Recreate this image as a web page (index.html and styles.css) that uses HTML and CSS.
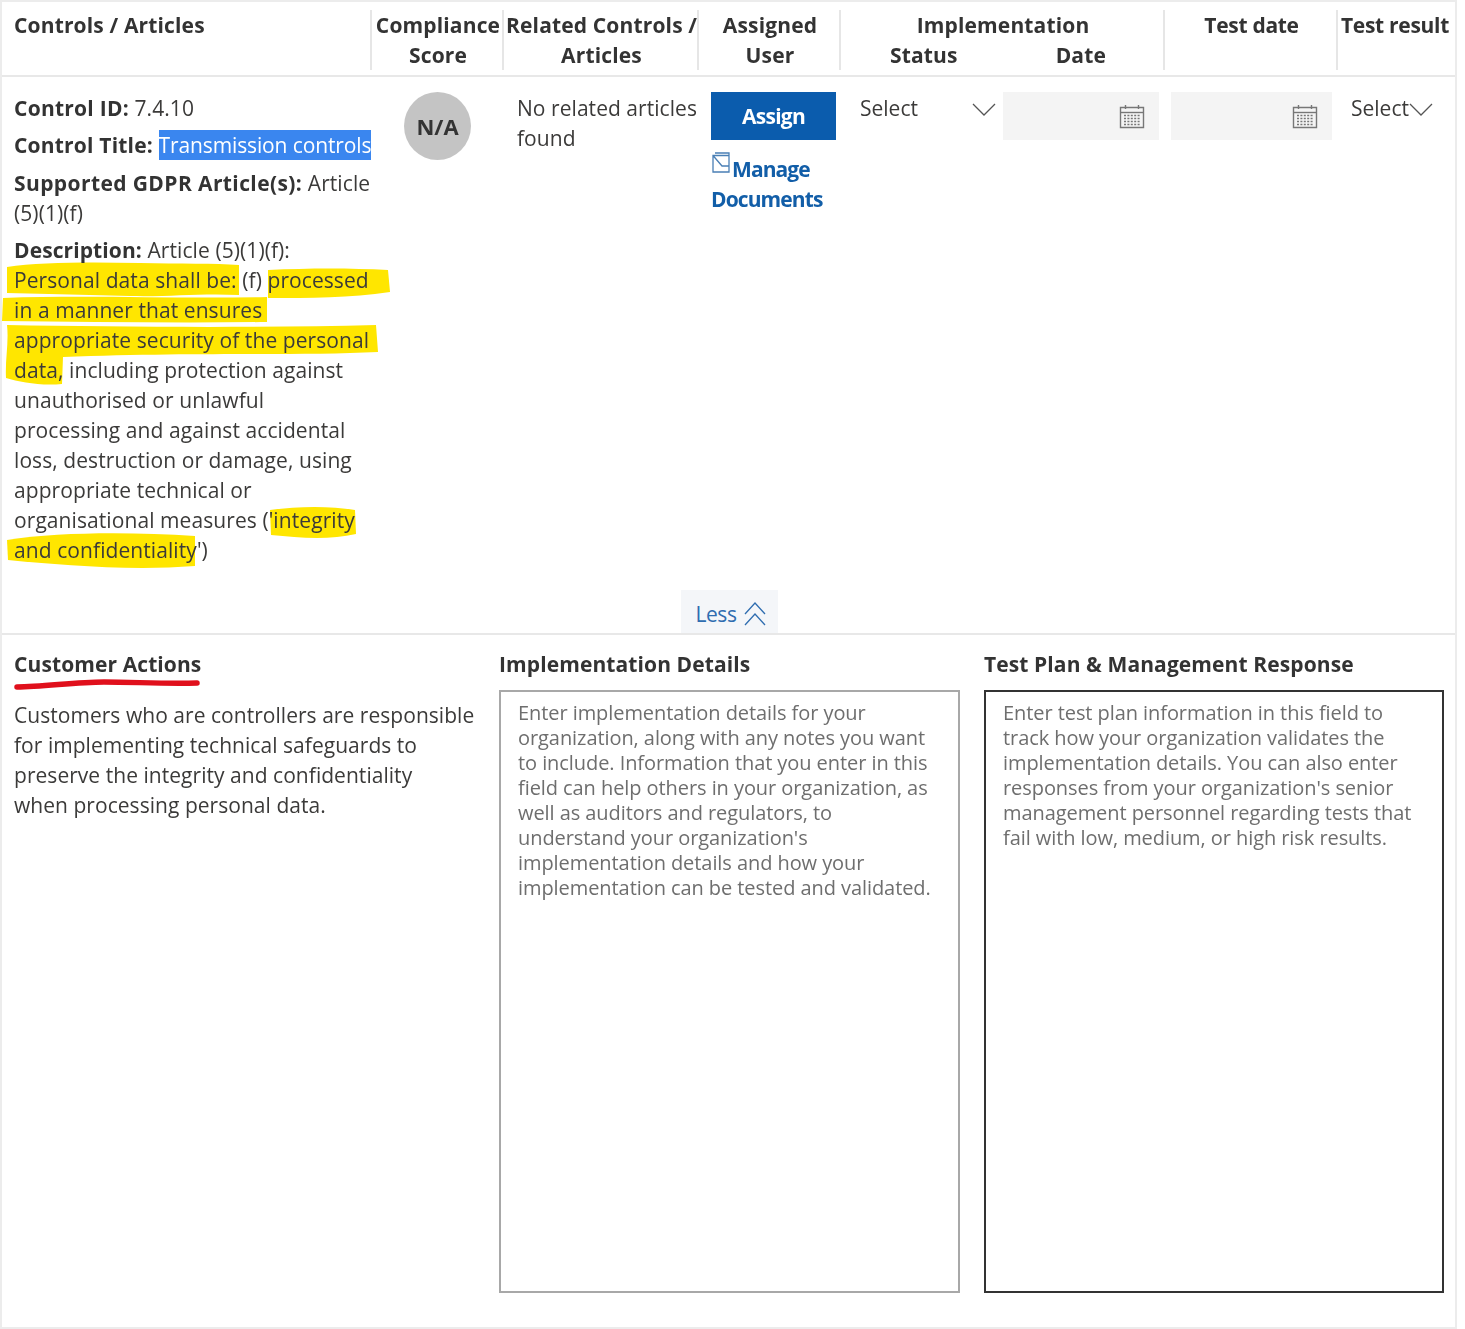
FILE: index.html
```html
<!DOCTYPE html>
<html lang="en">
<head>
<meta charset="utf-8">
<title>Controls</title>
<link rel="stylesheet" href="styles.css">
</head>
<body>
<div class="frame">
  <header class="head grid">
    <div class="hc hc-left">Controls / Articles</div>
    <div class="hc">Compliance<br>Score</div>
    <div class="hc">Related Controls /<br>Articles</div>
    <div class="hc">Assigned<br>User</div>
    <div class="hc">Implementation
      <div class="hsplit"><span>Status</span><span>Date</span></div>
    </div>
    <div class="hc hc-date">Test date</div>
    <div class="hc hc-last">Test result</div>
  </header>

  <section class="row grid">
    <div class="control">
      <svg class="marks" width="400" height="600" viewBox="0 0 400 600" aria-hidden="true">
        <g fill="#ffe600">
          <path d="M7 267 C40 262 90 262 140 263 C180 264 215 263 239 265 L239 295 C200 293 170 297 130 296 C90 295 50 294 7 293 Z"/>
          <path d="M268 270 C310 268 350 268 388 270 L390 292 C350 298 310 298 268 298 Z"/>
          <path d="M3 298 C90 295 180 299 267 297 L267 322 C180 323 90 322 2 321 Z"/>
          <path d="M7 325 C120 327 260 328 376 325 L378 352 C300 356 200 352 63 357 L62 384 C40 386 20 382 6 378 C5 360 9 342 7 325 Z"/>
          <path d="M270 510 C300 506 330 506 355 510 L356 534 C330 540 300 538 271 535 Z"/>
          <path d="M7 540 C60 532 130 532 195 536 L195 566 C130 571 60 565 8 560 Z"/>
        </g>
      </svg>
      <p class="line line-id"><b>Control ID:</b> 7.4.10</p>
      <p class="line line-title"><b>Control Title:</b> <span class="sel">Transmission controls</span></p>
      <p class="line line-gdpr"><b>Supported GDPR Article(s):</b> Article<br>(5)(1)(f)</p>
      <p class="line"><b>Description:</b> Article (5)(1)(f):<br>Personal data shall be: (f) processed<br>in a manner that ensures<br>appropriate security of the personal<br>data, including protection against<br>unauthorised or unlawful<br>processing and against accidental<br>loss, destruction or damage, using<br>appropriate technical or<br>organisational measures ('integrity<br>and confidentiality')</p>
    </div>
    <div class="score"><span class="badge">N/A</span></div>
    <div class="related">No related articles<br>found</div>
    <div class="assign">
      <button class="btn">Assign</button>
      <a class="docs" href="#"><svg class="docicon" width="18" height="21" viewBox="0 0 18 21" aria-hidden="true"><path d="M3 1H17V3.5M1 3.5H17V20H1ZM1 3.5L10 14H17" fill="none" stroke="#4a7fb5" stroke-width="1.3"/></svg>Manage<br>Documents</a>
    </div>
    <div class="impl">
      <div class="select sel-status"><span>Select</span><svg class="chev" width="24" height="14" viewBox="0 0 24 14" aria-hidden="true"><path d="M1 1l11 11L23 1" fill="none" stroke="#555" stroke-width="1.3"/></svg></div>
      <div class="date date-a"><svg class="cal" width="26" height="26" viewBox="0 0 26 26" aria-hidden="true"><use href="#calendar"/></svg></div>
    </div>
    <div class="tdate"><div class="date date-b"><svg class="cal" width="26" height="26" viewBox="0 0 26 26" aria-hidden="true"><use href="#calendar"/></svg></div></div>
    <div class="tresult"><div class="select"><span>Select</span><svg class="chev" width="24" height="14" viewBox="0 0 24 14" aria-hidden="true"><path d="M1 1l11 11L23 1" fill="none" stroke="#555" stroke-width="1.3"/></svg></div></div>
    <a class="less" href="#">Less<svg width="24" height="25" viewBox="0 0 24 25" aria-hidden="true"><path d="M2 13L12 2l10 11M2 24l10-11 10 11" fill="none" stroke="#2f6db0" stroke-width="1.3"/></svg></a>
  </section>

  <section class="details">
    <div class="col">
      <h2 class="ctitle">Customer Actions</h2>
      <svg class="redline" width="190" height="14" viewBox="0 0 190 14" aria-hidden="true"><path d="M3 10C30 10 60 5 90 5s60 2 93 1" fill="none" stroke="#e0101c" stroke-width="5.5" stroke-linecap="round"/></svg>
      <p class="ctext">Customers who are controllers are responsible<br>for implementing technical safeguards to<br>preserve the integrity and confidentiality<br>when processing personal data.</p>
    </div>
    <div class="col">
      <h2 class="ctitle">Implementation Details</h2>
      <div class="box">Enter implementation details for your<br>organization, along with any notes you want<br>to include. Information that you enter in this<br>field can help others in your organization, as<br>well as auditors and regulators, to<br>understand your organization's<br>implementation details and how your<br>implementation can be tested and validated.</div>
    </div>
    <div class="col">
      <h2 class="ctitle">Test Plan &amp; Management Response</h2>
      <div class="box box-focus">Enter test plan information in this field to<br>track how your organization validates the<br>implementation details. You can also enter<br>responses from your organization's senior<br>management personnel regarding tests that<br>fail with low, medium, or high risk results.</div>
    </div>
  </section>
</div>
<svg class="defs" width="0" height="0" aria-hidden="true">
  <defs>
    <g id="calendar" fill="none" stroke="#777" stroke-width="1.4">
      <path d="M1.5 4.5h23v20h-23z"/>
      <path d="M1.5 9.5h23"/>
      <path d="M6.5 2v4M19.5 2v4"/>
      <path d="M5 12.5h16M5 15.5h16M5 18.5h16M5 21.5h16" stroke-dasharray="2 1.4" stroke-width="1.3"/>
    </g>
  </defs>
</svg>
</body>
</html>
```
FILE: styles.css
```css
* { box-sizing: border-box; }
html, body { margin: 0; padding: 0; background: #fff; }
body {
  font-family: "Open Sans", "Noto Sans", "Liberation Sans", sans-serif;
  color: #3b3a39;
  font-size: 21px;
  line-height: 30px;
}
b { letter-spacing: 0.1px; color: #333; }
.frame {
  width: 1457px;
  height: 1329px;
  border: 2px solid #ececec;
}
.grid {
  display: grid;
  grid-template-columns: 369px 132px 195px 142px 324px 173px 1fr;
}
.head {
  grid-template-columns: 368px 132px 195px 142px 324px 173px 1fr;
  height: 75px;
  padding-top: 8px;
  border-bottom: 2px solid #e8e8e8;
  font-weight: 700;
  color: #333;
  letter-spacing: 0.15px;
}
.hc {
  height: 60px;
  padding-left: 2px;
  text-align: center;
  border-left: 2px solid #e6e6e6;
  white-space: nowrap;
}
.hc-left { border-left: 0; text-align: left; padding-left: 12px; }
.hc-date { letter-spacing: -0.3px; }
.hc-last { text-align: left; padding-left: 3px; letter-spacing: -0.3px; }
.hsplit { display: flex; justify-content: space-between; padding: 0 57px 0 47px; }

.row { position: relative; height: 556px; padding-top: 15px; }
.control { position: relative; padding: 1px 0 0 12px; white-space: nowrap; letter-spacing: 0.08px; }
.marks { position: absolute; left: -2px; top: -92px; pointer-events: none; mix-blend-mode: multiply; }
.line { margin: 0 0 7px; position: relative; }
.line-id b { letter-spacing: 0.25px; }
.line-title { margin-bottom: 8px; }
.line-title b { letter-spacing: 0.2px; }
.line-gdpr b { letter-spacing: 0.4px; }
.sel { background: #3a86ef; color: #fff; display: inline-block; letter-spacing: -0.12px; }
.score { display: flex; justify-content: center; align-items: flex-start; padding-left: 1px; }
.badge {
  width: 67px; height: 68px; border-radius: 50%;
  background: #c4c4c4;
  display: flex; align-items: center; justify-content: center;
  font-size: 22px; font-weight: 700; color: #333;
}
.related { padding: 1px 0 0 14px; white-space: nowrap; letter-spacing: 0.05px; }
.assign { padding-left: 13px; }
.btn {
  display: block; width: 125px; height: 48px;
  background: #0b5cad; color: #fff; border: 0; padding: 0;
  font: 700 21px/30px "Open Sans", sans-serif; letter-spacing: -0.7px;
}
.docs {
  display: block; margin-top: 12px;
  color: #125ea8; font-weight: 700; text-decoration: none;
  white-space: nowrap; letter-spacing: -0.9px;
}
.docicon { vertical-align: 4px; margin: 0 2px 0 1px; }
.impl { display: flex; padding: 1px 0 0 20px; }
.select { display: flex; align-items: flex-start; white-space: nowrap; }
.select .chev { margin-top: 10px; flex: none; }
.sel-status { width: 136px; margin-right: 7px; justify-content: space-between; }
.date {
  height: 48px; background: #f4f4f4;
  display: flex; align-items: center; justify-content: flex-end;
}
.impl .date { margin-top: -1px; }
.date-a { width: 156px; padding-right: 14px; }
.date-b { width: 161px; padding-right: 14px; }
.tdate { padding-left: 7px; }
.tresult { padding: 1px 0 0 14px; }
.less {
  position: absolute; left: 679px; bottom: 0;
  width: 97px; height: 43px; padding: 4px 0 0 3px;
  background: #f4f6f9;
  display: flex; align-items: center; justify-content: center; gap: 6px;
  color: #2f6db0; text-decoration: none; letter-spacing: -0.4px;
}
.details {
  display: grid;
  grid-template-columns: 485px 485px 460px;
  padding: 14px 0 0 12px;
  border-top: 2px solid #e8e8e8;
}
.ctitle {
  margin: 0; font-size: 21px; line-height: 30px; font-weight: 700;
  color: #333; white-space: nowrap; letter-spacing: 0.1px;
}
.redline { display: block; margin-top: -2px; }
.ctext { margin: 9px 0 0; white-space: nowrap; letter-spacing: 0.04px; }
.box {
  margin-top: 11px;
  height: 603px; width: 461px;
  border: 2px solid #a8a8a8;
  padding: 8px 17px;
  font-size: 20px; line-height: 25px; letter-spacing: -0.07px;
  color: #6e6e6e;
  white-space: nowrap;
}
.box-focus { border-color: #333; width: 460px; }
.defs { position: absolute; }
```
